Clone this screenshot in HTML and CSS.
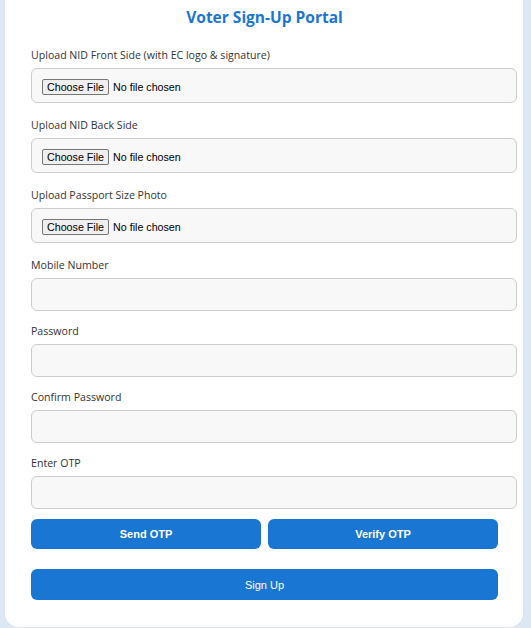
FILE: index.html
```html
<!DOCTYPE html>
<html lang="en">
<head>
<meta charset="utf-8">
<title>Voter Sign-Up Portal</title>
<link rel="stylesheet" href="styles.css">
</head>
<body>
<div class="card">
  <h2 class="title">Voter Sign-Up Portal</h2>
  <div class="field field--file">
    <label class="label">Upload NID Front Side (with EC logo &amp; signature)</label>
    <input class="input input--file" type="file">
  </div>
  <div class="field field--file">
    <label class="label">Upload NID Back Side</label>
    <input class="input input--file" type="file">
  </div>
  <div class="field field--file">
    <label class="label">Upload Passport Size Photo</label>
    <input class="input input--file" type="file">
  </div>
  <div class="field">
    <label class="label">Mobile Number</label>
    <input class="input" type="text">
  </div>
  <div class="field">
    <label class="label">Password</label>
    <input class="input" type="password">
  </div>
  <div class="field">
    <label class="label">Confirm Password</label>
    <input class="input" type="password">
  </div>
  <div class="field field--tight">
    <label class="label">Enter OTP</label>
    <input class="input" type="text">
  </div>
  <div class="actions">
    <button class="btn btn--bold">Send OTP</button>
    <button class="btn btn--bold">Verify OTP</button>
  </div>
  <button class="btn btn--wide">Sign Up</button>
</div>
</body>
</html>
```
FILE: styles.css
```css
html, body {
  margin: 0;
  padding: 0;
}
body {
  background: #dbe7f3;
  min-height: 100vh;
  font-family: "Open Sans", "Noto Sans", sans-serif;
}
.card {
  margin-left: 5px;
  width: 518px;
  box-sizing: border-box;
  background: #ffffff;
  border-radius: 0 0 14px 14px;
  padding: 7px 25px 27px 26px;
}
.title {
  margin: 0 0 21px;
  text-align: center;
  color: #1b76d2;
  font-size: 15.5px;
  line-height: 20px;
  font-weight: 700;
}
.field {
  margin-bottom: 13px;
}
.field--file {
  margin-bottom: 15px;
}
.field--tight {
  margin-bottom: 10px;
}
.label {
  display: block;
  font-size: 10.6px;
  line-height: 15px;
  color: #333333;
  margin-bottom: 5px;
}
.input {
  display: block;
  box-sizing: border-box;
  width: calc(100% + 19px);
  height: 33px;
  margin: 0;
  padding: 0 10px;
  border: 1px solid #cccccc;
  border-radius: 6px;
  background: #f8f8f8;
  font-family: "Liberation Sans", Arial, sans-serif;
  font-size: 10.7px;
  color: #000000;
}
.input--file {
  height: 35px;
  padding: 10px 10px 0;
}
.input--file::file-selector-button {
  font-family: "Liberation Sans", Arial, sans-serif;
  font-size: 10.7px;
  line-height: 12px;
  padding: 1px 4px;
  margin-right: 4px;
  border: 1px solid #767676;
  border-radius: 2px;
  background: #efefef;
  color: #000000;
}
.actions {
  display: flex;
  gap: 7px;
}
.btn {
  flex: 1;
  height: 30px;
  border: none;
  border-radius: 6px;
  background: #1a76d3;
  color: #ffffff;
  font-family: "Liberation Sans", Arial, sans-serif;
  font-size: 11px;
  padding: 0;
}
.btn--bold {
  font-weight: 700;
}
.btn--wide {
  display: block;
  width: 100%;
  height: 31px;
  margin-top: 20px;
}
```
